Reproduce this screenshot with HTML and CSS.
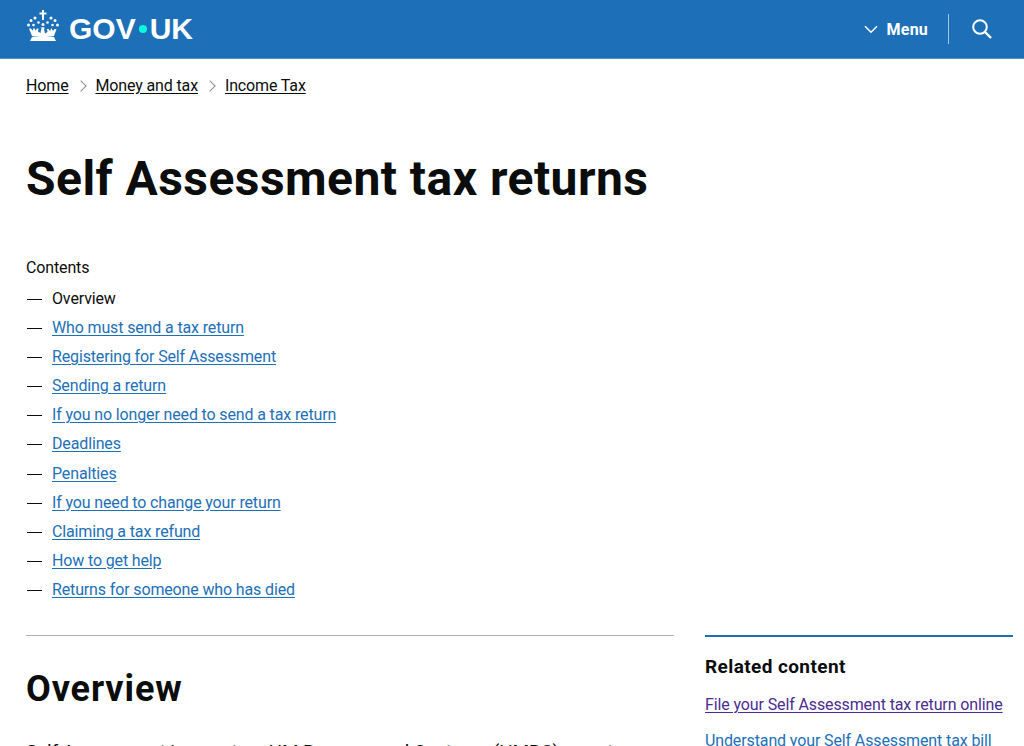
FILE: index.html
```html
<!DOCTYPE html>
<html lang="en">
<head>
  <meta charset="UTF-8" />
  <title>Self Assessment tax returns</title>
  <link rel="stylesheet" href="styles.css">
</head>
<body>
  <header class="topbar">
    <a class="logo" href="#">
      <svg class="crown" viewBox="0 0 34 32" width="34" height="32" aria-hidden="true">
        <g fill="#fff">
          <path d="M16 0h2v2.500h2.500v2H18V10h-2V4.500h-2.500v-2H16z"/>
          <circle cx="9" cy="8" r="1.500"/>
          <circle cx="25" cy="8" r="1.500"/>
          <circle cx="5" cy="10.500" r="1.500"/>
          <circle cx="29" cy="10.500" r="1.500"/>
          <circle cx="2.500" cy="15" r="1.500"/>
          <circle cx="31.500" cy="15" r="1.500"/>
          <circle cx="12.500" cy="12.500" r="1.300"/>
          <circle cx="21.500" cy="12.500" r="1.300"/>
          <circle cx="17" cy="14.500" r="1.500"/>
          <circle cx="7.500" cy="15" r="1.300"/>
          <circle cx="26.500" cy="15" r="1.300"/>
          <path d="M3 18.500h2l1.500 2 1.500-3 1.500 3 1.500-2h1.500l-.5 3 2.500 1.500 1-5h-1.500L17 17l2.500 1.500H18l1 5 2.500-1.500-.5-3h1.500l1.500 2 1.500-3 1.500 3 1.500-2h2L28 26H6z"/>
          <path d="M6 27c6.500-1.200 15.500-1.200 22 0l2 4H4z"/>
        </g>
      </svg>
      <span class="logo-text">GOV<span class="dot"></span>UK</span>
    </a>
    <div class="nav">
      <svg class="chevron" viewBox="0 0 14 9" width="14" height="9" aria-hidden="true">
        <path d="M1 1.200 7 7.200 13 1.200" fill="none" stroke="#fff" stroke-width="1.500"/>
      </svg>
      <span class="menu">Menu</span>
      <span class="divider"></span>
      <svg class="search" viewBox="0 0 22 22" width="22" height="22" aria-hidden="true">
        <circle cx="9" cy="9" r="6.800" fill="none" stroke="#fff" stroke-width="2"/>
        <path d="M14 14 20 20" fill="none" stroke="#fff" stroke-width="2.400"/>
      </svg>
    </div>
  </header>

  <nav class="breadcrumbs">
    <a href="#">Home</a>
    <span class="sep"></span>
    <a href="#">Money and tax</a>
    <span class="sep"></span>
    <a href="#">Income Tax</a>
  </nav>

  <h1>Self Assessment tax returns</h1>

  <section class="contents">
    <p class="contents-title">Contents</p>
    <ul>
      <li>Overview</li>
      <li><a href="#">Who must send a tax return</a></li>
      <li><a href="#">Registering for Self Assessment</a></li>
      <li><a href="#">Sending a return</a></li>
      <li><a href="#">If you no longer need to send a tax return</a></li>
      <li><a href="#">Deadlines</a></li>
      <li><a href="#">Penalties</a></li>
      <li><a href="#">If you need to change your return</a></li>
      <li><a href="#">Claiming a tax refund</a></li>
      <li><a href="#">How to get help</a></li>
      <li><a href="#">Returns for someone who has died</a></li>
    </ul>
  </section>

  <div class="columns">
    <main class="main-col">
      <h2>Overview</h2>
      <p>Self Assessment is a system HM Revenue and Customs (HMRC) uses to</p>
    </main>
    <aside class="related">
      <h3>Related content</h3>
      <a class="visited" href="#">File your Self Assessment tax return online</a>
      <a href="#">Understand your Self Assessment tax bill</a>
    </aside>
  </div>
</body>
</html>
```

FILE: styles.css
```css
html,
body {
  height: 746px;
  overflow: hidden;
}

body {
  margin: 0;
  font-family: Roboto, Arial, sans-serif;
  color: #0b0c0c;
  background: #fff;
}

a {
  color: #1d70b8;
  text-underline-offset: 2px;
}

.topbar {
  height: 58px;
  background: #1d70b8;
  border-bottom: 1px solid #5694ca;
  display: flex;
  justify-content: space-between;
  align-items: center;
  padding: 0 31px 0 26px;
}

.logo {
  display: flex;
  align-items: center;
  gap: 9px;
  color: #fff;
  text-decoration: none;
}

.crown {
  margin-bottom: 6px;
}

.logo-text {
  font-family: "Liberation Sans", Arial, sans-serif;
  font-weight: 700;
  font-size: 30px;
  display: flex;
  align-items: center;
}

.dot {
  width: 8px;
  height: 8px;
  border-radius: 50%;
  background: #00ffe0;
  margin: 0 3px;
}

.nav {
  display: flex;
  align-items: center;
}

.chevron {
  margin-right: 9px;
}

.menu {
  color: #fff;
  font-weight: 700;
  font-size: 16px;
  letter-spacing: 0.2px;
}

.divider {
  width: 1px;
  height: 30px;
  background: #a5c6e3;
  margin: 0 22px 0 20px;
}

.breadcrumbs {
  display: flex;
  align-items: center;
  padding: 16px 26px 0;
  font-size: 16px;
  line-height: 22px;
  letter-spacing: -0.14px;
}

.breadcrumbs a {
  color: #0b0c0c;
}

.sep {
  width: 7px;
  height: 7px;
  border-top: 1px solid #8a8f92;
  border-right: 1px solid #8a8f92;
  transform: rotate(45deg);
  margin: 0 11px 0 8px;
}

h1 {
  margin: 54px 26px 0;
  font-size: 48px;
  line-height: 56px;
  font-weight: 700;
  letter-spacing: 0.45px;
}

.contents {
  margin: 50px 26px 0;
  font-size: 16px;
  letter-spacing: -0.14px;
}

.contents-title {
  margin: 0;
  line-height: 22px;
}

.contents ul {
  list-style: none;
  margin: 9px 0 0;
  padding: 0;
}

.contents li {
  position: relative;
  padding-left: 26px;
  height: 29.100px;
  line-height: 22px;
}

.contents li::before {
  content: "";
  position: absolute;
  left: 1px;
  top: 11px;
  width: 15px;
  height: 1px;
  background: #0b0c0c;
}

.columns {
  display: flex;
  gap: 31px;
  margin: 27px 11px 0 26px;
}

.main-col {
  width: 648px;
  border-top: 1px solid #b1b4b6;
}

h2 {
  margin: 31px 0 0;
  font-size: 36px;
  line-height: 44px;
  font-weight: 700;
  letter-spacing: 0.9px;
}

.main-col p {
  margin: 28px 0 0;
  font-size: 19px;
  line-height: 25px;
  letter-spacing: -0.18px;
}

.related {
  flex: 1;
  border-top: 2px solid #1d70b8;
  font-size: 16px;
  letter-spacing: -0.12px;
}

h3 {
  margin: 18px 0 0;
  font-size: 19px;
  line-height: 24px;
  font-weight: 700;
  letter-spacing: 0.4px;
}

.related a {
  display: block;
  margin-top: 16px;
  line-height: 20px;
}

.related a.visited {
  color: #4c2c92;
}
```
